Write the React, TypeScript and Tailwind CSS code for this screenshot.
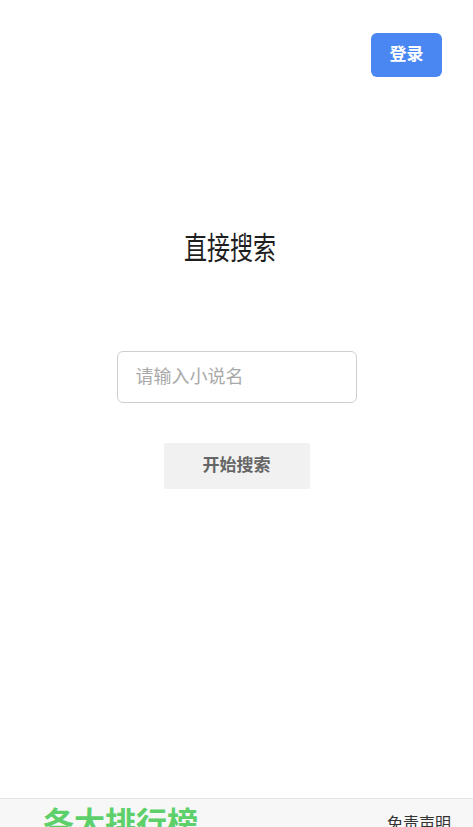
export default function App() {
  return (
    <div
      className="h-[827px] overflow-hidden bg-white"
      style={{ fontFamily: '"Liberation Sans", "Noto Sans CJK SC", sans-serif' }}
    >
      <main className="h-[798px] flex flex-col">
        <header className="flex justify-end pt-[33px] pr-[31px]">
          <button className="w-[71px] h-[44px] rounded-[6px] bg-[#4a87f2] text-white text-[17px] font-bold">
            登录
          </button>
        </header>

        <div className="mt-[155px] flex justify-center pr-[13px]">
          <h1 className="inline-block scale-y-[1.35] text-[23px] leading-[32px] text-[#1e1e1e]">直接搜索</h1>
        </div>

        <div className="mt-[87px] flex justify-center">
          <input
            className="w-[240px] h-[52px] rounded-[6px] border border-[#cfcfcf] px-[18px] text-[18px] outline-none placeholder:text-[#a9a9a9]"
            placeholder="请输入小说名"
          />
        </div>

        <div className="mt-[40px] flex justify-center">
          <button className="w-[146px] h-[46px] rounded-[2px] bg-[#f1f1f1] text-[17px] font-bold text-[#666]">
            开始搜索
          </button>
        </div>
      </main>

      <footer className="h-[60px] border-t border-[#e3e3e3] bg-[#f7f7f7] flex items-start justify-between pl-[43px] pr-[22px]">
        <span className="mt-[8px] text-[31px] leading-[34px] font-bold text-[#5dd06b]">各大排行榜</span>
        <span className="mt-[16px] text-[16px] leading-[18px] text-[#333]">免责声明</span>
      </footer>
    </div>
  );
}
